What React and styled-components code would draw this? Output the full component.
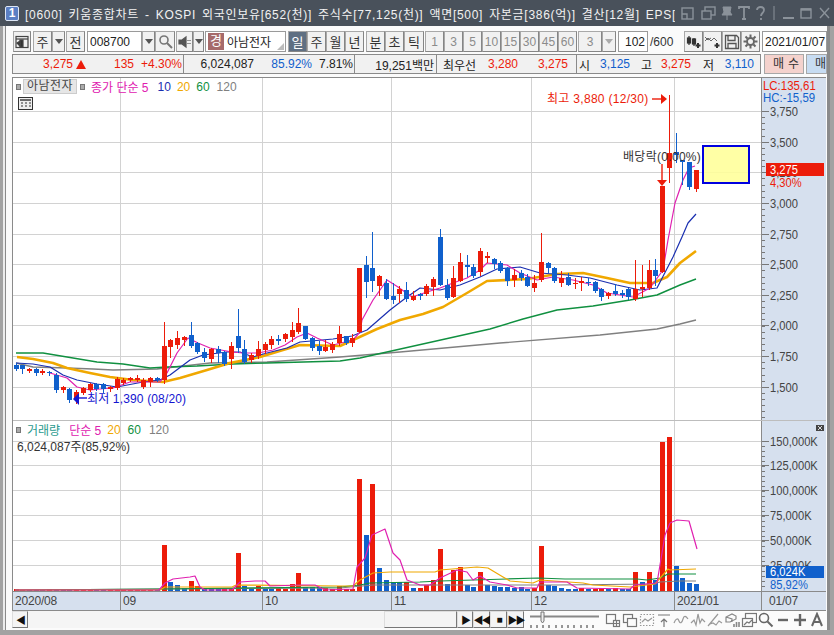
import styled, { createGlobalStyle } from 'styled-components';

const RED = '#ec1c0a';
const BLUE = '#1060cc';
const NAVY = '#1a2fb0';
const MAGENTA = '#e020b0';
const ORANGE = '#f0a800';
const GREEN = '#109040';
const GRAY = '#808080';
const GRID = '#d2d2d2';
const AXIS_BG = '#d6e0ee';

// candles in screen pixels: top, bottom, wick top, wick bottom, red?
const candles = [
  [365, 369, 363, 370, 0], [365, 369, 365, 373, 0], [369, 371, 368, 372, 1], [369, 373, 368, 375, 0],
  [371, 373, 369, 374, 1], [372, 373, 371, 375, 0], [375, 390, 373, 392, 0], [387, 390, 386, 392, 1],
  [389, 400, 388, 402, 0], [392, 400, 390, 403, 1], [388, 393, 387, 394, 1], [384, 390, 383, 391, 1],
  [384, 389, 383, 390, 0], [384, 389, 383, 392, 0], [387, 389, 386, 391, 1], [379, 388, 377, 389, 1],
  [380, 383, 378, 384, 1], [378, 380, 377, 381, 1], [378, 380, 375, 381, 1], [380, 387, 378, 388, 1],
  [378, 382, 377, 386, 1], [378, 380, 377, 381, 0], [346, 380, 322, 383, 1], [340, 347, 339, 357, 1],
  [338, 345, 331, 348, 1], [337, 340, 336, 345, 1], [335, 346, 322, 347, 0], [343, 352, 342, 353, 0],
  [352, 358, 348, 361, 0], [349, 359, 348, 362, 1], [349, 353, 346, 362, 0], [352, 364, 351, 365, 0],
  [346, 359, 342, 368, 1], [336, 348, 309, 352, 0], [349, 362, 340, 363, 0], [355, 360, 353, 362, 1],
  [349, 356, 341, 358, 1], [344, 350, 342, 353, 1], [339, 345, 336, 348, 1], [339, 341, 335, 344, 0],
  [334, 339, 333, 341, 1], [330, 337, 322, 341, 1], [323, 332, 308, 333, 1], [326, 339, 326, 339, 0],
  [338, 348, 337, 350, 0], [346, 351, 341, 354, 0], [347, 351, 340, 351, 1], [344, 350, 342, 352, 1],
  [334, 343, 326, 345, 1], [336, 343, 336, 344, 0], [338, 343, 334, 346, 1], [268, 332, 268, 332, 1],
  [265, 282, 256, 297, 0], [268, 281, 232, 291, 0], [276, 286, 275, 295, 1], [283, 299, 279, 299, 0],
  [296, 300, 283, 303, 0], [289, 294, 286, 302, 1], [290, 299, 282, 301, 0], [296, 300, 291, 300, 1],
  [294, 296, 293, 299, 0], [286, 294, 284, 295, 1], [279, 287, 277, 295, 1], [237, 285, 229, 285, 0],
  [285, 298, 279, 299, 0], [278, 297, 266, 297, 1], [262, 281, 253, 281, 1], [265, 267, 255, 276, 0],
  [267, 276, 264, 277, 0], [251, 272, 248, 275, 1], [256, 258, 252, 262, 1], [259, 264, 258, 268, 0],
  [263, 271, 261, 272, 0], [268, 281, 267, 285, 0], [275, 280, 269, 286, 1], [273, 278, 270, 280, 0],
  [277, 286, 274, 286, 0], [283, 288, 275, 291, 1], [262, 280, 233, 281, 1], [263, 268, 262, 272, 0],
  [268, 281, 267, 282, 0], [278, 283, 271, 286, 1], [277, 285, 273, 285, 0], [283, 284, 278, 288, 1],
  [281, 283, 277, 290, 1], [282, 283, 278, 285, 0], [282, 291, 281, 292, 0], [289, 297, 288, 300, 0],
  [293, 296, 292, 298, 1], [291, 294, 284, 295, 0], [293, 295, 290, 297, 0], [289, 297, 288, 299, 0],
  [289, 299, 260, 300, 1], [287, 289, 265, 296, 1], [270, 288, 260, 289, 1], [270, 276, 259, 285, 0],
  [186, 272, 186, 272, 1], [153, 168, 95, 182, 1], [152, 155, 133, 162, 0], [160, 162, 160, 184, 0],
  [162, 187, 162, 189, 0], [170, 189, 170, 191, 1],
];

// volume bars: height in pixels above the baseline, red?
const volumes = [
  [2, 1], [1, 1], [1, 0], [1, 0], [1, 0], [2, 1], [1, 0], [1, 0], [1, 0], [1, 1], [1, 1], [1, 1],
  [1, 0], [1, 0], [1, 1], [1, 1], [1, 1], [1, 1], [1, 1], [1, 1], [1, 1], [1, 0], [46, 1], [9, 0],
  [6, 0], [3, 0], [10, 1], [5, 1], [2, 0], [2, 0], [2, 0], [2, 1], [3, 1], [38, 1], [5, 0], [2, 0],
  [5, 1], [2, 0], [2, 0], [3, 1], [2, 1], [7, 1], [18, 1], [4, 0], [4, 0], [4, 0], [3, 1], [2, 1],
  [5, 1], [2, 1], [2, 1], [112, 1], [56, 0], [107, 1], [23, 0], [11, 0], [9, 0], [9, 0], [9, 1],
  [3, 0], [3, 1], [6, 1], [11, 1], [42, 1], [7, 0], [21, 1], [24, 1], [6, 0], [4, 0], [19, 1], [6, 0],
  [5, 0], [4, 0], [4, 0], [3, 0], [4, 0], [2, 0], [3, 1], [45, 1], [6, 0], [5, 0], [3, 0], [2, 0],
  [2, 0], [3, 1], [2, 0], [2, 1], [3, 1], [2, 0], [3, 1], [2, 0], [2, 0], [19, 1], [9, 0], [19, 1],
  [11, 0], [149, 1], [154, 1], [25, 0], [13, 0], [8, 0], [7, 0],
];

const priceLines = [
  { color: GRAY, w: 1.4, pts: '16,363 33,367 67,368 93,369 113,370 157,369 210,363 267,362 340,357 400,352 500,343 600,335 657,329 680,324 696,320' },
  { color: GREEN, w: 1.4, pts: '16,353 43,353 67,357 97,362 123,364 150,368 167,367 197,366 233,364 267,363 340,361 360,358 490,329 523,319 557,310 593,306 630,300 657,295 680,285 696,279' },
  { color: ORANGE, w: 2.6, pts: '17,357 33,359 53,363 67,368 90,373 110,377 133,380 163,382 180,378 207,370 230,363 260,357 283,350 300,345 340,346 377,329 400,320 423,314 443,307 467,293 487,281 527,279 557,274 583,273 607,278 630,283 653,283 667,277 680,263 696,251' },
  { color: NAVY, w: 1.2, pts: '16,363 33,364 50,367 63,375 77,380 97,384 117,387 143,382 160,380 170,375 190,360 203,355 227,352 240,352 253,357 267,353 287,348 300,342 333,339 352,336 367,330 390,310 407,297 420,288 440,290 460,285 480,277 497,269 520,267 540,273 567,275 590,278 617,285 640,290 657,288 673,257 682,237 688,223 696,214' },
  { color: MAGENTA, w: 1.2, pts: '50,373 67,378 77,387 90,390 100,389 113,388 130,382 147,382 160,382 167,373 177,353 188,338 198,343 210,348 232,352 243,353 258,353 273,350 285,345 297,337 307,333 317,338 333,345 353,340 360,332 362,320 373,300 387,280 398,287 412,297 427,292 440,288 453,283 467,278 480,270 487,263 507,265 520,273 537,280 553,277 573,280 593,285 607,293 633,297 650,288 663,270 668,240 675,203 683,180 689,168 695,166' },
];

const volumeLines = [
  { color: GRAY, pts: '15,590 160,589 340,588 373,585 440,585 557,585 653,584 660,582 680,581 696,581' },
  { color: GREEN, pts: '15,590 160,589 340,587 360,585 370,583 420,582 440,581 507,579 538,578 565,579 637,579 647,580 660,578 668,574 696,574' },
  { color: ORANGE, pts: '15,590 160,590 165,587 232,587 236,585 340,586 353,586 360,580 373,573 390,572 435,572 440,570 477,567 488,568 503,577 510,581 533,583 540,580 583,583 593,585 630,587 655,584 668,569 670,570 696,569' },
  { color: MAGENTA, pts: '15,590 159,590 165,583 173,579 190,577 195,576 200,587 205,590 232,590 240,582 255,581 265,581 270,586 300,585 315,585 325,590 353,589 357,567 365,558 372,535 385,529 393,553 400,560 407,580 420,585 430,585 440,578 457,570 467,572 473,580 480,576 490,582 507,585 517,588 537,588 540,582 567,582 577,588 630,589 635,585 657,583 665,535 670,523 677,520 689,521 697,549' },
];

const monthLines = [120, 262, 391, 531, 674];
const priceTicks = [
  ['3,750', 111], ['3,500', 142], ['3,250', 172], ['3,000', 203], ['2,750', 234],
  ['2,500', 264], ['2,250', 295], ['2,000', 325], ['1,750', 356], ['1,500', 387],
];
const volumeTicks = [
  ['150,000K', 441], ['125,000K', 465], ['100,000K', 490], ['75,000K', 515], ['50,000K', 540], ['25,000K', 565],
];

const candleX = (i) => Math.round(15.5 + 6.735 * i);

const GlobalStyle = createGlobalStyle`
  html, body {
    margin: 0;
    padding: 0;
    background: #fff;
    overflow: hidden;
  }
  * {
    box-sizing: border-box;
  }
`;

const Win = styled.div`
  width: 834px;
  height: 635px;
  display: flex;
  flex-direction: column;
  font: 12px 'Liberation Sans', 'Noto Sans CJK KR', sans-serif;
  color: #333;
`;

const TitleBar = styled.div`
  height: 26px;
  flex: none;
  background: #49515b;
  display: flex;
  align-items: center;
  padding-left: 5px;
  color: #f2f2f2;
`;

const TitleBadge = styled.div`
  width: 14px;
  height: 15px;
  margin-right: 6px;
  flex: none;
  background: #5b7fc4;
  border: 1px solid #dde6f5;
  border-radius: 2px;
  color: #fff;
  font-weight: bold;
  text-align: center;
  line-height: 13px;
`;

const TitleText = styled.div`
  width: 650px;
  overflow: hidden;
  white-space: nowrap;
  letter-spacing: 0.7px;
  word-spacing: 2px;
`;

const TitleIcons = styled.div`
  display: flex;
  align-items: center;
  margin-left: 4px;
`;

const Frame = styled.div`
  flex: 1;
  min-height: 0;
  display: flex;
  border-left: 3px solid #a2a2a2;
  border-right: 4px solid #a2a2a2;
  border-bottom: 5px solid #a2a2a2;
  background: #ececec;
`;

const Inner = styled.div`
  flex: 1;
  margin-left: 2px;
  border-left: 1px solid #8a8a8a;
  border-right: 3px solid #8a8a8a;
  padding: 5px 1px 2px 6px;
  background: #fbfbfb;
  display: flex;
  flex-direction: column;
  min-width: 0;
`;

const Toolbar = styled.div`
  height: 21px;
  flex: none;
  display: flex;
  padding-left: 1px;
`;

const ToolBtn = styled.div`
  width: ${({ $w }) => $w}px;
  flex: none;
  margin-left: ${({ $ml }) => $ml || 0}px;
  display: flex;
  align-items: center;
  justify-content: center;
  border: 1px solid #a8a8a8;
  border-right-color: #858585;
  border-bottom-color: #858585;
  background: ${({ $on }) => ($on ? '#5f6f82' : '#f1f1f1')};
  color: ${({ $on, $dim }) => ($on ? '#fff' : $dim ? '#8b8b8b' : '#333')};
  font-size: ${({ $dim }) => ($dim ? 12 : 13)}px;
`;

const Field = styled.div`
  width: ${({ $w }) => $w}px;
  flex: none;
  margin-left: ${({ $ml }) => $ml || 0}px;
  display: flex;
  align-items: center;
  justify-content: ${({ $right }) => ($right ? 'flex-end' : 'flex-start')};
  padding: 0 2px;
  border: 1px solid #9a9a9a;
  background: #fff;
  color: #222;
  font-size: 12px;
  position: relative;
`;

const CodeBadge = styled.span`
  width: 16px;
  height: 17px;
  margin: 0 3px 0 0;
  background: #a66a6a;
  color: #fff;
  text-align: center;
  font-size: 13px;
  line-height: 16px;
  flex: none;
`;

const Corner = styled.span`
  position: absolute;
  right: 1px;
  bottom: 1px;
  width: 0;
  height: 0;
  border-left: 7px solid transparent;
  border-bottom: 7px solid #bbb;
`;

const Caret = styled.span`
  width: 0;
  height: 0;
  border-left: 4px solid transparent;
  border-right: 4px solid transparent;
  border-top: 5px solid ${({ $dim }) => ($dim ? '#aaa' : '#555')};
`;

const Slash = styled.span`
  width: 34px;
  margin-left: 2px;
  flex: none;
  align-self: center;
  color: #333;
`;

const InfoRow = styled.div`
  height: 20px;
  margin-top: 2px;
  flex: none;
  display: flex;
`;

const InfoBox = styled.div`
  width: 749px;
  display: flex;
  border: 1px solid #8a8a8a;
  background: #f1f1f1;
`;

const InfoCell = styled.div`
  width: ${({ $w }) => $w}px;
  flex: none;
  display: flex;
  align-items: center;
  border-right: 1px solid #8a8a8a;
  &:last-child {
    border-right: 0;
  }
`;

const Val = styled.span`
  width: ${({ $w }) => $w}px;
  margin-left: ${({ $ml }) => $ml || 0}px;
  flex: none;
  text-align: right;
  white-space: nowrap;
  color: ${({ $c }) => $c || '#222'};
`;

const UpMark = styled.span`
  margin-left: 3px;
  flex: none;
  width: 0;
  height: 0;
  border-left: 5px solid transparent;
  border-right: 5px solid transparent;
  border-bottom: 9px solid ${RED};
`;

const TradeBtn = styled.div`
  width: ${({ $w }) => $w}px;
  margin-left: ${({ $ml }) => $ml}px;
  flex: none;
  overflow: hidden;
  padding-left: 8px;
  white-space: nowrap;
  letter-spacing: 4px;
  line-height: 18px;
  background: ${({ $bg }) => $bg};
  border: 1px solid #a8a8a8;
  color: #333;
`;

const ChartBox = styled.div`
  margin-top: 3px;
  width: 814px;
  flex: none;
  display: flex;
  flex-direction: column;
  border-left: 1px solid #8a8a8a;
  border-top: 1px solid #8a8a8a;
`;

const Pane = styled.div`
  height: ${({ $h }) => $h}px;
  flex: none;
  display: flex;
  border-bottom: ${({ $line }) => $line};
`;

const Plot = styled.div`
  width: 748px;
  flex: none;
  background: #fff;
  position: relative;
`;

const ChartSvg = styled.svg`
  display: block;
  width: 100%;
  height: 100%;
  font: 12px 'Liberation Sans', 'Noto Sans CJK KR', sans-serif;
`;

const AxisCol = styled.div`
  flex: 1;
  min-width: 0;
  background: ${AXIS_BG};
  border-left: 1px solid #8a8a8a;
  position: relative;
`;

const Legend = styled.div`
  position: absolute;
  left: 3px;
  top: ${({ $top }) => $top}px;
  display: flex;
  align-items: center;
  height: 15px;
  white-space: nowrap;
`;

const Square = styled.span`
  width: 5px;
  height: 6px;
  margin: ${({ $m }) => $m};
  flex: none;
  background: #aaa;
  border: 1px solid #777;
`;

const LegendName = styled.span`
  background: #e6e6e6;
  border: 1px solid #ccc;
  width: 54px;
  height: 15px;
  line-height: 13px;
  text-align: center;
  letter-spacing: 0.4px;
  color: #444;
  margin-right: 3px;
`;

const LegendItem = styled.span`
  color: ${({ $c }) => $c};
  margin-left: ${({ $ml }) => $ml || 0}px;
`;

const VolumeText = styled.div`
  position: absolute;
  left: 4px;
  top: 16px;
  color: #333;
`;

const CalcIcon = styled.svg`
  position: absolute;
  left: 5px;
  top: 19px;
`;

const DateRow = styled.div`
  height: 19px;
  flex: none;
  display: flex;
  background: ${AXIS_BG};
  border-bottom: 1px solid #8a8a8a;
  color: #444;
`;

const DateCell = styled.div`
  width: ${({ $w }) => $w}px;
  flex: none;
  padding-left: 2px;
  line-height: 18px;
  letter-spacing: -0.2px;
  border-right: 1px solid #8a8a8a;
  &:last-child {
    border-right: 0;
    padding-left: 7px;
  }
`;

const BottomBar = styled.div`
  height: 17px;
  flex: none;
  display: flex;
  align-items: stretch;
`;

const NavBtn = styled.div`
  width: ${({ $w }) => $w}px;
  margin-left: ${({ $ml }) => $ml || 0}px;
  flex: none;
  display: flex;
  align-items: center;
  justify-content: center;
  background: #f4f4f4;
  border: 1px solid #ddd;
  border-right-color: #777;
  border-bottom-color: #777;
  font-size: 10px;
  letter-spacing: -2px;
  color: #111;
`;

const Track = styled.div`
  width: ${({ $w }) => $w}px;
  flex: none;
  background-color: #f5f5f5;
  background-image: radial-gradient(#e6e6e6 0.5px, transparent 0.6px);
  background-size: 2px 2px;
`;

const SliderWrap = styled.svg`
  margin-left: 4px;
  flex: none;
`;

const ToolIcons = styled.div`
  flex: 1;
  display: flex;
  align-items: center;
  gap: 1px;
  margin-left: 5px;
`;

const Ico = ({ w = 16, h = 16, c = '#777', sw = 1.2, children }) => (
  <svg width={w} height={h} viewBox={`0 0 ${w} ${h}`} fill="none" stroke={c} strokeWidth={sw}>
    {children}
  </svg>
);

// axis text in the reference is tall and narrow, so it gets squeezed sideways
const AxisText = ({ x = 770, y, fill = '#444', sx = 0.86, children }) => (
  <text transform={`translate(${x} ${y}) scale(${sx} 1)`} fill={fill} fontSize="13">
    {children}
  </text>
);

const Candles = () => (
  <g shapeRendering="crispEdges">
    {candles.map(([top, bot, wt, wb, up], i) => {
      const c = candleX(i);
      const col = up ? RED : BLUE;
      return (
        <g key={i}>
          <rect x={c} y={wt} width={1} height={wb - wt + 1} fill={col} />
          <rect x={c - 2} y={top} width={5} height={Math.max(bot - top, 1)} fill={col} />
        </g>
      );
    })}
  </g>
);

const Bars = () => (
  <g shapeRendering="crispEdges">
    {volumes.map(([h, up], i) => (
      <rect key={i} x={candleX(i) - 2} y={591 - h} width={5} height={h} fill={up ? RED : BLUE} />
    ))}
  </g>
);

const Grid = ({ ys, top, bottom }) => (
  <g stroke={GRID} strokeWidth="1" shapeRendering="crispEdges">
    {ys.map((y) => (
      <line key={y} x1="13" x2="761" y1={y + 0.5} y2={y + 0.5} />
    ))}
    {monthLines.map((x) => (
      <line key={x} x1={x + 0.5} x2={x + 0.5} y1={top} y2={bottom} />
    ))}
  </g>
);

const Lines = ({ data, w }) =>
  data.map((l) => (
    <polyline key={l.color} points={l.pts} fill="none" stroke={l.color} strokeWidth={l.w || w} strokeLinejoin="round" />
  ));

const PriceChart = () => (
  <ChartSvg viewBox="13 78 748 342">
    <Grid ys={priceTicks.map((t) => t[1])} top={78} bottom={420} />
    <Lines data={priceLines} />
    <Candles />
    <rect x="703" y="146" width="46" height="37" fill="#ffff99" fillOpacity="0.88" stroke="#0000e0" strokeWidth="2" />
    <text x="547" y="103" fill={RED} letterSpacing="0.3">최고 3,880 (12/30)</text>
    <path d="M652 99h10" stroke={RED} strokeWidth="1.4" />
    <path d="M667 99l-6-5v10z" fill={RED} />
    <text x="623" y="161" fill="#333" letterSpacing="0.3">배당락(0.00%)</text>
    <path d="M662 164v16" stroke={RED} strokeWidth="1.4" />
    <path d="M662 186l-5-6h10z" fill={RED} />
    <text x="87" y="403" fill="#1414d0" letterSpacing="0.15">최저 1,390 (08/20)</text>
    <path d="M78 398h9" stroke="#1414d0" strokeWidth="1.4" />
    <path d="M73 399l6-6v12z" fill="#1414d0" />
  </ChartSvg>
);

const VolumeChart = () => (
  <ChartSvg viewBox="13 421 748 170">
    <Grid ys={volumeTicks.map((t) => t[1])} top={421} bottom={591} />
    <Bars />
    <Lines data={volumeLines} w={1.2} />
  </ChartSvg>
);

const AxisTicks = ({ labels, y0, y1, step, major }) => {
  const minor = [];
  for (let y = y0; y < y1; y += step) minor.push(Math.round(y));
  return (
    <g>
      <g stroke="#777" shapeRendering="crispEdges">
        {minor.map((y) => (
          <line key={y} x1="762" x2="765" y1={y + 0.5} y2={y + 0.5} />
        ))}
        {labels.map(([, y]) => (
          <line key={y} x1="762" x2={major} y1={y + 0.5} y2={y + 0.5} />
        ))}
      </g>
      {labels.map(([t, y]) => (
        <AxisText key={t} y={y + 5}>{t}</AxisText>
      ))}
    </g>
  );
};

const PriceAxis = () => (
  <ChartSvg viewBox="762 78 64 342">
    <AxisTicks labels={priceTicks} y0={111} y1={420} step={6.13} major={769} />
    <AxisText x={763} y={90} fill={RED} sx={0.88}>LC:135,61</AxisText>
    <AxisText x={763} y={102} fill={BLUE} sx={0.88}>HC:-15,59</AxisText>
    <rect x="766" y="163" width="58" height="13" fill={RED} />
    <AxisText y={174} fill="#fff">3,275</AxisText>
    <AxisText y={187} fill={RED}>4,30%</AxisText>
  </ChartSvg>
);

const VolumeAxis = () => (
  <ChartSvg viewBox="762 421 64 170">
    <AxisTicks labels={volumeTicks} y0={441} y1={591} step={5} major={769} />
    <rect x="816" y="425" width="8" height="6" fill="#444" />
    <path d="M818 426l4 4M822 426l-4 4" stroke="#fff" strokeWidth="0.8" />
    <rect x="766" y="566" width="58" height="12" fill={BLUE} />
    <AxisText y={576} fill="#fff">6,024K</AxisText>
    <AxisText y={589} fill={BLUE}>85,92%</AxisText>
  </ChartSvg>
);

const TitleIconSet = () => (
  <TitleIcons>
    <Ico w={20} h={16} c="#8b929a" sw={1.4}>
      <rect x="3" y="3" width="11" height="11" />
      <path d="M3 9h5v5" />
    </Ico>
    <Ico w={19} h={16} c="#8b929a" sw={1.4}>
      <rect x="6" y="2" width="10" height="8" />
      <rect x="3" y="6" width="9" height="8" fill="#49515b" />
    </Ico>
    <Ico w={18} h={16} c="#8b929a" sw={1}>
      <path d="M5 2h8l-1 5 2 3H4l2-3zM9 10v5" fill="#8b929a" />
    </Ico>
    <Ico w={16} h={16} c="#8b929a" sw={1.8}>
      <path d="M3 4V2h10v2M8 2v12M6 14h4" />
    </Ico>
    <Ico w={18} h={16} c="#8b929a" sw={1.8}>
      <path d="M5 5c0-4 7-4 7 0 0 3-3 3-3 6M9 13v2" />
    </Ico>
    <Ico w={10} h={18} c="#8b929a" sw={1}>
      <path d="M4 2v14" />
    </Ico>
    <Ico w={18} h={16} c="#8b929a" sw={2}>
      <path d="M3 13h11" />
    </Ico>
    <Ico w={18} h={16} c="#8b929a" sw={1.4}>
      <rect x="3" y="4" width="10" height="9" />
      <path d="M3 4.5h10" strokeWidth="2.4" />
    </Ico>
    <Ico w={18} h={16} c="#8b929a" sw={1.4}>
      <path d="M4 3l9 10M13 3l-9 10" />
    </Ico>
  </TitleIcons>
);

const TopToolbar = () => (
  <Toolbar>
    <ToolBtn $w={18}>
      <Ico w={14} h={14} c="#444">
        <rect x="1" y="1.5" width="12" height="11" />
        <path d="M1 4h12" />
        <rect x="5" y="5" width="3" height="7" fill="#333" />
        <path d="M2 8l3-2v5z" fill="#333" />
      </Ico>
    </ToolBtn>
    <ToolBtn $w={19} $ml={2}>주</ToolBtn>
    <ToolBtn $w={13}><Caret /></ToolBtn>
    <ToolBtn $w={19} $ml={1}>전</ToolBtn>
    <Field $w={55} $ml={2}>008700</Field>
    <ToolBtn $w={13}><Caret /></ToolBtn>
    <ToolBtn $w={20}>
      <Ico w={15} h={15} c="#777" sw={1.6}>
        <circle cx="6" cy="6" r="4" />
        <path d="M9 9l5 5" strokeWidth="2" />
      </Ico>
    </ToolBtn>
    <ToolBtn $w={17} $ml={1}>
      <Ico w={14} h={14} c="#555">
        <path d="M1 5h3l4-3v10L4 9H1z" fill="#555" />
        <path d="M10 5v1M10 8v1M12 5v1M12 8v1" />
      </Ico>
    </ToolBtn>
    <ToolBtn $w={11}><Caret /></ToolBtn>
    <Field $w={81} $ml={1}>
      <CodeBadge>경</CodeBadge>아남전자
      <Corner />
    </Field>
    <ToolBtn $w={19} $ml={2} $on>일</ToolBtn>
    {['주', '월', '년'].map((t) => (
      <ToolBtn key={t} $w={19}>{t}</ToolBtn>
    ))}
    <ToolBtn $w={19} $ml={2}>분</ToolBtn>
    <ToolBtn $w={19}>초</ToolBtn>
    <ToolBtn $w={20}>틱</ToolBtn>
    {['1', '3', '5', '10', '15', '30', '45', '60'].map((t, i) => (
      <ToolBtn key={t} $w={19} $ml={i === 0 ? 1 : 0} $dim>{t}</ToolBtn>
    ))}
    <ToolBtn $w={24} $ml={1} $dim>3</ToolBtn>
    <ToolBtn $w={14}><Caret $dim /></ToolBtn>
    <Field $w={30} $ml={2} $right>102</Field>
    <Slash>/600</Slash>
    <ToolBtn $w={19} $ml={0}>
      <Ico w={17} h={15} c="#333">
        <path d="M4 2v9M9 4v8" />
        <rect x="2.5" y="4" width="3" height="5" fill="#333" />
        <rect x="7.5" y="5" width="3" height="5" fill="#333" />
        <path d="M13 9v5M10.5 11.5h5" strokeWidth="2" />
      </Ico>
    </ToolBtn>
    <ToolBtn $w={19}>
      <Ico w={17} h={15} c="#666" sw={1}>
        <path d="M1 7l3-3 3 3 3-3 3 3" />
        <path d="M1 3l3 3 3-2" />
        <path d="M13 9v5M10.5 11.5h5" stroke="#333" strokeWidth="2" />
      </Ico>
    </ToolBtn>
    <ToolBtn $w={19}>
      <Ico w={16} h={16} c="#555" sw={1.3}>
        <path d="M1.5 1.5h11l2 2v11h-13z" />
        <path d="M4 1.5v5h7v-5M4 14.5v-5h8v5" />
      </Ico>
    </ToolBtn>
    <ToolBtn $w={19}>
      <Ico w={15} h={15} c="#666" sw={2}>
        <circle cx="7.5" cy="7.5" r="3.5" />
        <path d="M7.5 0.5v3M7.5 11.5v3M0.5 7.5h3M11.5 7.5h3M2.5 2.5l2 2M10.5 10.5l2 2M12.5 2.5l-2 2M4.5 10.5l-2 2" />
      </Ico>
    </ToolBtn>
    <Field $w={65} $ml={2}>2021/01/07</Field>
  </Toolbar>
);

const InfoBar = () => (
  <InfoRow>
    <InfoBox>
      <InfoCell $w={171}>
        <Val $w={60} $c={RED}>3,275</Val>
        <UpMark />
        <Val $w={48} $c={RED}>135</Val>
        <Val $w={48} $c={RED}>+4.30%</Val>
      </InfoCell>
      <InfoCell $w={171}>
        <Val $w={70}>6,024,087</Val>
        <Val $w={58} $c={BLUE}>85.92%</Val>
        <Val $w={41}>7.81%</Val>
      </InfoCell>
      <InfoCell $w={82}>
        <Val $w={79}>19,251백만</Val>
      </InfoCell>
      <InfoCell $w={140}>
        <Val $w={36} $ml={3}>최우선</Val>
        <Val $w={42} $c={RED}>3,280</Val>
        <Val $w={50} $c={RED}>3,275</Val>
      </InfoCell>
      <InfoCell $w={183}>
        <Val $w={12} $ml={1}>시</Val>
        <Val $w={40} $c={BLUE}>3,125</Val>
        <Val $w={12} $ml={10}>고</Val>
        <Val $w={39} $c={RED}>3,275</Val>
        <Val $w={12} $ml={11}>저</Val>
        <Val $w={40} $c={BLUE}>3,110</Val>
      </InfoCell>
    </InfoBox>
    <TradeBtn $w={40} $ml={3} $bg="#f4d2cd">매수</TradeBtn>
    <TradeBtn $w={21} $ml={2} $bg="#c7dcf2">매도</TradeBtn>
  </InfoRow>
);

const SmallTools = () => (
  <ToolIcons>
    <Ico>
      <rect x="1.5" y="2.5" width="9" height="9" />
      <rect x="8.5" y="8.5" width="6" height="6" fill="#fbfbfb" />
      <path d="M11.5 8.5v6M8.5 11.5h6" />
    </Ico>
    <Ico>
      <rect x="1.5" y="2.5" width="9" height="8" />
      <rect x="5.5" y="6.5" width="9" height="8" fill="#fbfbfb" />
    </Ico>
    <Ico c="#999">
      <rect x="1.5" y="2.5" width="13" height="11" strokeDasharray="1.5 1.5" />
      <path d="M3 10l3-3 3 2 4-3" />
    </Ico>
    <Ico>
      <path d="M2 3h12M8 15V7M5 10l3-3 3 3" />
    </Ico>
    <Ico c="#999">
      <path d="M1 11c2-5 4-5 5-2s3 2 4-2 3-3 5 0" />
    </Ico>
    <Ico c="#999">
      <path d="M1 11l3-3 2 5 2-11 2 9 2-4 3 3" />
    </Ico>
    <Ico c="#999">
      <path d="M1 14L11 2M3 12l3-1 3 2 3-4 3 2" />
    </Ico>
    <Ico c="#888">
      <path d="M2 10V5l6-3 4 2v3l-6 3zM2 5l6 2v3" />
      <path d="M10 15v-3M12.5 15v-5M15 15v-5" strokeWidth="1.6" />
    </Ico>
    <Ico c="#777">
      <rect x="4.5" y="1.5" width="11" height="9" />
      <rect x="1.5" y="6.5" width="10" height="8" fill="#fbfbfb" />
      <path d="M3 13l3-3 2 1 3-3" />
    </Ico>
    <Ico c="#666" sw={1.6}>
      <circle cx="6" cy="6" r="4.5" />
      <path d="M9.5 9.5l5 5" strokeWidth="2" />
    </Ico>
    <Ico c="#666" sw={2.4}>
      <path d="M3 8h10" />
    </Ico>
    <Ico c="#666" sw={2.4}>
      <path d="M2 8h12M8 2v12" />
    </Ico>
    <Ico c="#666" sw={2}>
      <path d="M3 14l5-12 5 12M5 10h6" />
    </Ico>
  </ToolIcons>
);

const App = () => (
  <>
    <GlobalStyle />
    <Win>
      <TitleBar>
        <TitleBadge>1</TitleBadge>
        <TitleText>
          [0600] 키움종합차트 - KOSPI 외국인보유[652(천)] 주식수[77,125(천)] 액면[500] 자본금[386(억)] 결산[12월] EPS[6,154]
        </TitleText>
        <TitleIconSet />
      </TitleBar>
      <Frame>
        <Inner>
          <TopToolbar />
          <InfoBar />
          <ChartBox>
            <Pane $h={343} $line="1px solid #bdbdbd">
              <Plot>
                <PriceChart />
                <Legend $top={1}>
                  <Square $m="0 2px 0 0" />
                  <LegendName>아남전자</LegendName>
                  <Square $m="0 6px 0 0" />
                  <LegendItem $c={MAGENTA}>종가 단순 5</LegendItem>
                  <LegendItem $c={NAVY} $ml={9}>10</LegendItem>
                  <LegendItem $c={ORANGE} $ml={6}>20</LegendItem>
                  <LegendItem $c={GREEN} $ml={6}>60</LegendItem>
                  <LegendItem $c={GRAY} $ml={7}>120</LegendItem>
                </Legend>
                <CalcIcon width="15" height="13" viewBox="0 0 15 13">
                  <rect x="0.5" y="0.5" width="14" height="12" fill="#eee" stroke="#333" />
                  <path d="M2 3h11" stroke="#333" strokeWidth="1.4" />
                  <path d="M3 6h2M7 6h2M11 6h2M3 9h2M7 9h2M11 9h2" stroke="#333" />
                </CalcIcon>
              </Plot>
              <AxisCol>
                <PriceAxis />
              </AxisCol>
            </Pane>
            <Pane $h={171} $line="1px solid #8a8a8a">
              <Plot>
                <VolumeChart />
                <Legend $top={1}>
                  <Square $m="0 6px 0 0" />
                  <LegendItem $c="#2a9a8e">거래량</LegendItem>
                  <LegendItem $c={MAGENTA} $ml={9}>단순 5</LegendItem>
                  <LegendItem $c={ORANGE} $ml={6}>20</LegendItem>
                  <LegendItem $c={GREEN} $ml={7}>60</LegendItem>
                  <LegendItem $c={GRAY} $ml={8}>120</LegendItem>
                </Legend>
                <VolumeText>6,024,087주(85,92%)</VolumeText>
              </Plot>
              <AxisCol>
                <VolumeAxis />
              </AxisCol>
            </Pane>
            <DateRow>
              <DateCell $w={108}>2020/08</DateCell>
              <DateCell $w={142}>09</DateCell>
              <DateCell $w={129}>10</DateCell>
              <DateCell $w={140}>11</DateCell>
              <DateCell $w={143}>12</DateCell>
              <DateCell $w={87}>2021/01</DateCell>
              <DateCell $w={64}>01/07</DateCell>
            </DateRow>
          </ChartBox>
          <BottomBar>
            <NavBtn $w={16}>◀</NavBtn>
            <Track $w={356} />
            <NavBtn $w={73} />
            <NavBtn $w={16}>▶</NavBtn>
            <NavBtn $w={17}>◀◀</NavBtn>
            <NavBtn $w={17}>■</NavBtn>
            <NavBtn $w={17}>▶▶</NavBtn>
            <SliderWrap width="72" height="17" viewBox="0 0 72 17">
              <path d="M2 5.5h69" stroke="#888" strokeWidth="2" />
              <path d="M13 1h3v9l-1.5 2-1.5-2z" fill="#eee" stroke="#777" />
              {[3, 9, 15, 21, 28, 34, 40, 46, 53, 59, 65].map((x) => (
                <path key={x} d={`M${x} 14v3`} stroke="#333" />
              ))}
            </SliderWrap>
            <SmallTools />
          </BottomBar>
        </Inner>
      </Frame>
    </Win>
  </>
);

export default App;
